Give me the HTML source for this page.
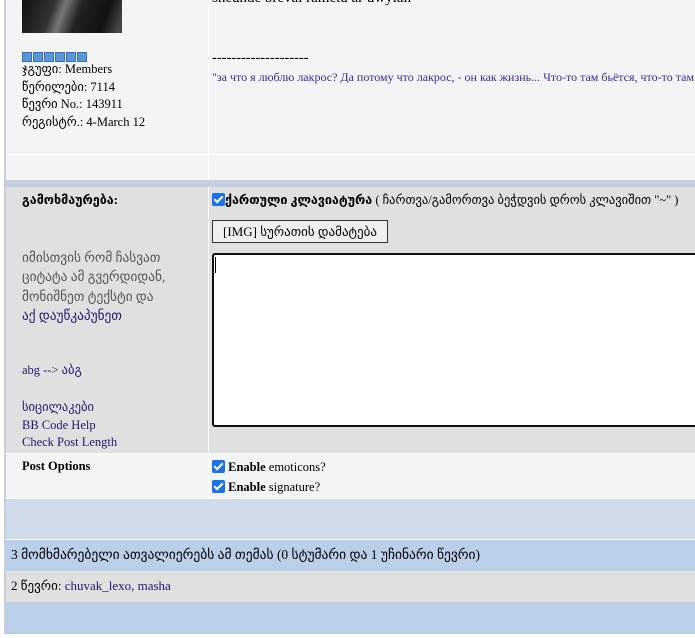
<!DOCTYPE html>
<html><head><meta charset="utf-8"><style>
body{margin:0;width:695px;height:638px;overflow:hidden;background:#fff;font-family:"Liberation Serif","DejaVu Sans",serif;font-size:12.5px;color:#000;position:relative}
.a{position:absolute;white-space:nowrap}
.lnk{color:#1e1a6e}
.cb{display:inline-block;width:13px;height:13px;background:#1a73e8;border-radius:2px;vertical-align:-2px;position:relative}
.cb:after{content:"";position:absolute;left:4px;top:1px;width:3px;height:7px;border:solid #fff;border-width:0 2px 2px 0;transform:rotate(45deg)}
</style></head><body>
<div class="a" style="left:4px;top:0;width:2px;height:634px;background:#c5d0dc"></div>
<div class="a" style="left:6px;top:0;width:689px;height:154px;background:#f3f5f4"></div>
<div class="a" style="left:6px;top:155px;width:689px;height:25px;background:#f3f5f4"></div>
<div class="a" style="left:208px;top:0;width:1px;height:180px;background:#fff"></div>
<div class="a" style="left:6px;top:180px;width:689px;height:7px;background:#c5d0de"></div>
<div class="a" style="left:22px;top:0;width:100px;height:33px;background:linear-gradient(110deg,#111 0%,#333 30%,#777 40%,#222 55%,#111 80%,#444 95%)"></div>
<div class="a" style="left:22px;top:51px;height:10px">
<span style="display:inline-block;width:8px;height:8px;background:#5b95dc;border:1px solid #3a6fb0;margin-right:1px"></span><span style="display:inline-block;width:8px;height:8px;background:#5b95dc;border:1px solid #3a6fb0;margin-right:1px"></span><span style="display:inline-block;width:8px;height:8px;background:#5b95dc;border:1px solid #3a6fb0;margin-right:1px"></span><span style="display:inline-block;width:8px;height:8px;background:#5b95dc;border:1px solid #3a6fb0;margin-right:1px"></span><span style="display:inline-block;width:8px;height:8px;background:#5b95dc;border:1px solid #3a6fb0;margin-right:1px"></span><span style="display:inline-block;width:8px;height:8px;background:#5b95dc;border:1px solid #3a6fb0"></span></div>
<div class="a" style="left:22px;top:61px;line-height:17.7px;font-size:12.5px">ჯგუფი: Members<br>წერილები: 7114<br>წევრი No.: 143911<br>რეგისტრ.: 4-March 12</div>
<div class="a" style="left:212px;top:-10px;font-size:15px">sheunde breval rametu ar uwylan</div>
<div class="a" style="left:212px;top:50px;font-size:14.5px">--------------------</div>
<div class="a" style="left:212px;top:70px;font-size:12px;color:#3a2a9a">"за что я люблю лакрос? Да потому что лакрос, - он как жизнь... Что-то там бьётся, что-то там ...</div>
<div class="a" style="left:6px;top:187px;width:689px;height:266px;background:#dfe0e0"></div>
<div class="a" style="left:208px;top:187px;width:1px;height:266px;background:#fff"></div>
<div class="a" style="left:22px;top:192px;font-weight:bold;font-size:12.5px">გამოხმაურება:</div>
<div class="a" style="left:212px;top:192px;font-size:12.5px"><span class="cb"></span><b>ქართული კლავიატურა</b> ( ჩართვა/გამორთვა ბეჭდვის დროს კლავიშით "~" )</div>
<div class="a" style="left:212px;top:220px;width:174px;height:21px;border:1px solid #333;background:#efefef;font-size:13px;line-height:21px;text-align:center">[IMG] სურათის დამატება</div>
<div class="a" style="left:212px;top:253px;width:490px;height:170px;border:2px solid #111;border-radius:3px;background:#fff"></div>
<div class="a" style="left:215px;top:257px;width:1px;height:16px;background:#000"></div>
<div class="a" style="left:22px;top:248px;line-height:19.3px;color:#555;font-size:13.3px">იმისთვის რომ ჩასვათ<br>ციტატა ამ გვერდიდან,<br>მონიშნეთ ტექსტი და<br><span class="lnk">აქ დაუწკაპუნეთ</span></div>
<div class="a lnk" style="left:22px;top:362px">abg --&gt; აბგ</div>
<div class="a lnk" style="left:22px;top:399px;line-height:17.5px">სიცილაკები<br>BB Code Help<br>Check Post Length</div>
<div class="a" style="left:6px;top:454px;width:689px;height:44px;background:#f3f5f4"></div>
<div class="a" style="left:208px;top:454px;width:1px;height:44px;background:#fff"></div>
<div class="a" style="left:22px;top:459px;font-weight:bold">Post Options</div>
<div class="a" style="left:212px;top:460px"><span class="cb"></span> <b>Enable</b> emoticons?</div>
<div class="a" style="left:212px;top:480px"><span class="cb"></span> <b>Enable</b> signature?</div>
<div class="a" style="left:6px;top:499px;width:689px;height:40px;background:#d0dce9"></div>
<div class="a" style="left:6px;top:540px;width:689px;height:31px;background:#bccfe9"></div>
<div class="a" style="left:11px;top:547px;font-size:13.5px">3 მომხმარებელი ათვალიერებს ამ თემას (0 სტუმარი და 1 უჩინარი წევრი)</div>
<div class="a" style="left:6px;top:571px;width:689px;height:31px;background:#dfe0e0"></div>
<div class="a" style="left:11px;top:578px;font-size:13px">2 წევრი: <span class="lnk">chuvak_lexo, masha</span></div>
<div class="a" style="left:6px;top:602px;width:689px;height:32px;background:#bccfe9"></div>
</body></html>
